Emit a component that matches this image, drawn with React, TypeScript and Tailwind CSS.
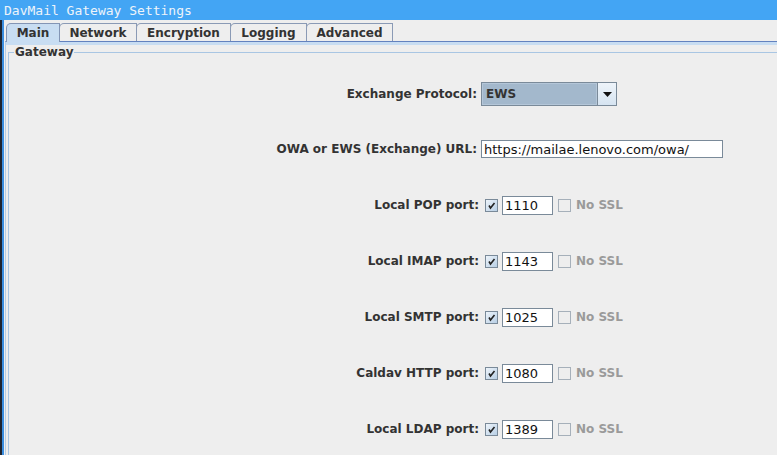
import type { ReactNode } from "react";

const TABS = [
  { name: "Main", w: "w-[54px]", selected: true },
  { name: "Network", w: "w-[78px]" },
  { name: "Encryption", w: "w-[95px]" },
  { name: "Logging", w: "w-[77px]" },
  { name: "Advanced", w: "w-[87px]" },
];

const PORTS = [
  { label: "Local POP port:", value: "1110" },
  { label: "Local IMAP port:", value: "1143" },
  { label: "Local SMTP port:", value: "1025" },
  { label: "Caldav HTTP port:", value: "1080" },
  { label: "Local LDAP port:", value: "1389" },
];

function CheckBox({ checked }: { checked?: boolean }) {
  if (!checked)
    return <span className="block h-[13px] w-[13px] shrink-0 border border-[#a6b0ba]" />;
  return (
    <span className="flex h-[13px] w-[13px] shrink-0 items-center justify-center border border-[#7a8a99] bg-gradient-to-br from-[#eef4fa] to-[#b8cfe5]">
      <svg width="9" height="9" viewBox="0 0 9 9">
        <path d="M2 4.5 L3.5 7 L7.5 2" fill="none" stroke="#222" strokeWidth="1.6" />
      </svg>
    </span>
  );
}

function Row({ label, h, children, labelW = "w-[468px]" }: { label: string; h: string; children: ReactNode; labelW?: string }) {
  return (
    <div className={`flex items-center ${h}`}>
      <div className={`${labelW} text-right text-[12px] font-bold text-[#333]`}>{label}</div>
      <div className="ml-[4px] flex items-center">{children}</div>
    </div>
  );
}

export default function App() {
  return (
    <div
      className="h-[455px] w-[777px] overflow-hidden bg-[#eeeeee] text-[13px] leading-[15px]"
      style={{ fontFamily: '"DejaVu Sans", sans-serif' }}
    >
      <div
        className="flex h-[20px] items-center bg-[#43a5f4] pl-[4px] text-[13px] text-[#eef4fa]"
        style={{ fontFamily: '"DejaVu Sans Mono", monospace' }}
      >
        DavMail Gateway Settings
      </div>
      <div className="flex h-[435px]">
        <div className="w-[2px] bg-[#1d2430]" />
        <div className="w-[2px] bg-[#3b8ee0]" />
        <div className="flex flex-1 flex-col pl-[1px] pt-[3px]">
          <div className="ml-[1px] flex h-[18px] items-end text-[12px]">
            {TABS.map((t) =>
              t.selected ? (
                <div
                  key={t.name}
                  className={`relative z-10 -mb-px flex h-[19px] ${t.w} items-center justify-center rounded-tl-[5px] border-x border-t border-[#8395b5] bg-[#c8ddf2] pt-[1px] font-bold text-[#333]`}
                >
                  {t.name}
                </div>
              ) : (
                <div
                  key={t.name}
                  className={`-ml-px flex h-[18px] ${t.w} items-center justify-center rounded-tl-[5px] border-x border-t border-[#8a9ab5] bg-[#eeeeee] pt-[1px] font-bold text-[#333]`}
                >
                  {t.name}
                </div>
              )
            )}
          </div>
          <div className="flex flex-1 flex-col border-l border-t border-l-[#b8cfe5] border-t-[#6382bf]">
            <div className="h-[3px] bg-[#c8ddf2]" />
            <div className="flex-1 pl-[2px]">
              <fieldset className="border-l border-t border-[#a9c6e3]">
                <legend className="ml-[5px] px-[1px] text-[12px] font-bold leading-[14px] text-[#333]">
                  Gateway
                </legend>
                <div className="pt-[8px]">
                  <Row label="Exchange Protocol:" h="h-[54px]">
                    <div className="flex h-[24px] w-[136px] border border-[#7a8a99] bg-[#a3b8cc]">
                      <div className="flex flex-1 items-center border border-[#b4c6d8] pl-[3px] text-[12px] font-bold text-[#333]">
                        EWS
                      </div>
                      <div className="flex w-[19px] items-center justify-center border-l border-[#7a8a99] bg-gradient-to-b from-[#eef4fa] to-[#d6e4f1]">
                        <svg width="9" height="5" viewBox="0 0 9 5">
                          <path d="M0 0 H9 L4.5 5 Z" fill="#111" />
                        </svg>
                      </div>
                    </div>
                  </Row>
                  <Row label="OWA or EWS (Exchange) URL:" h="h-[56px]">
                    <div className="flex h-[18px] w-[242px] items-center border border-[#7a8a99] bg-white pl-[2px] text-[#111]">
                      https://mailae.lenovo.com/owa/
                    </div>
                  </Row>
                  {PORTS.map((p) => (
                    <Row key={p.label} label={p.label} h="h-[56px]" labelW="w-[470px]">
                      <div className="ml-[2px]">
                        <CheckBox checked />
                      </div>
                      <div className="ml-[4px] flex h-[19px] w-[51px] items-center border border-[#7a8a99] bg-white pl-[2px] text-[#111]">
                        {p.value}
                      </div>
                      <div className="ml-[5px]">
                        <CheckBox />
                      </div>
                      <span className="ml-[5px] text-[12px] font-bold text-[#9a9a9a]">No SSL</span>
                    </Row>
                  ))}
                </div>
              </fieldset>
            </div>
          </div>
        </div>
      </div>
    </div>
  );
}
